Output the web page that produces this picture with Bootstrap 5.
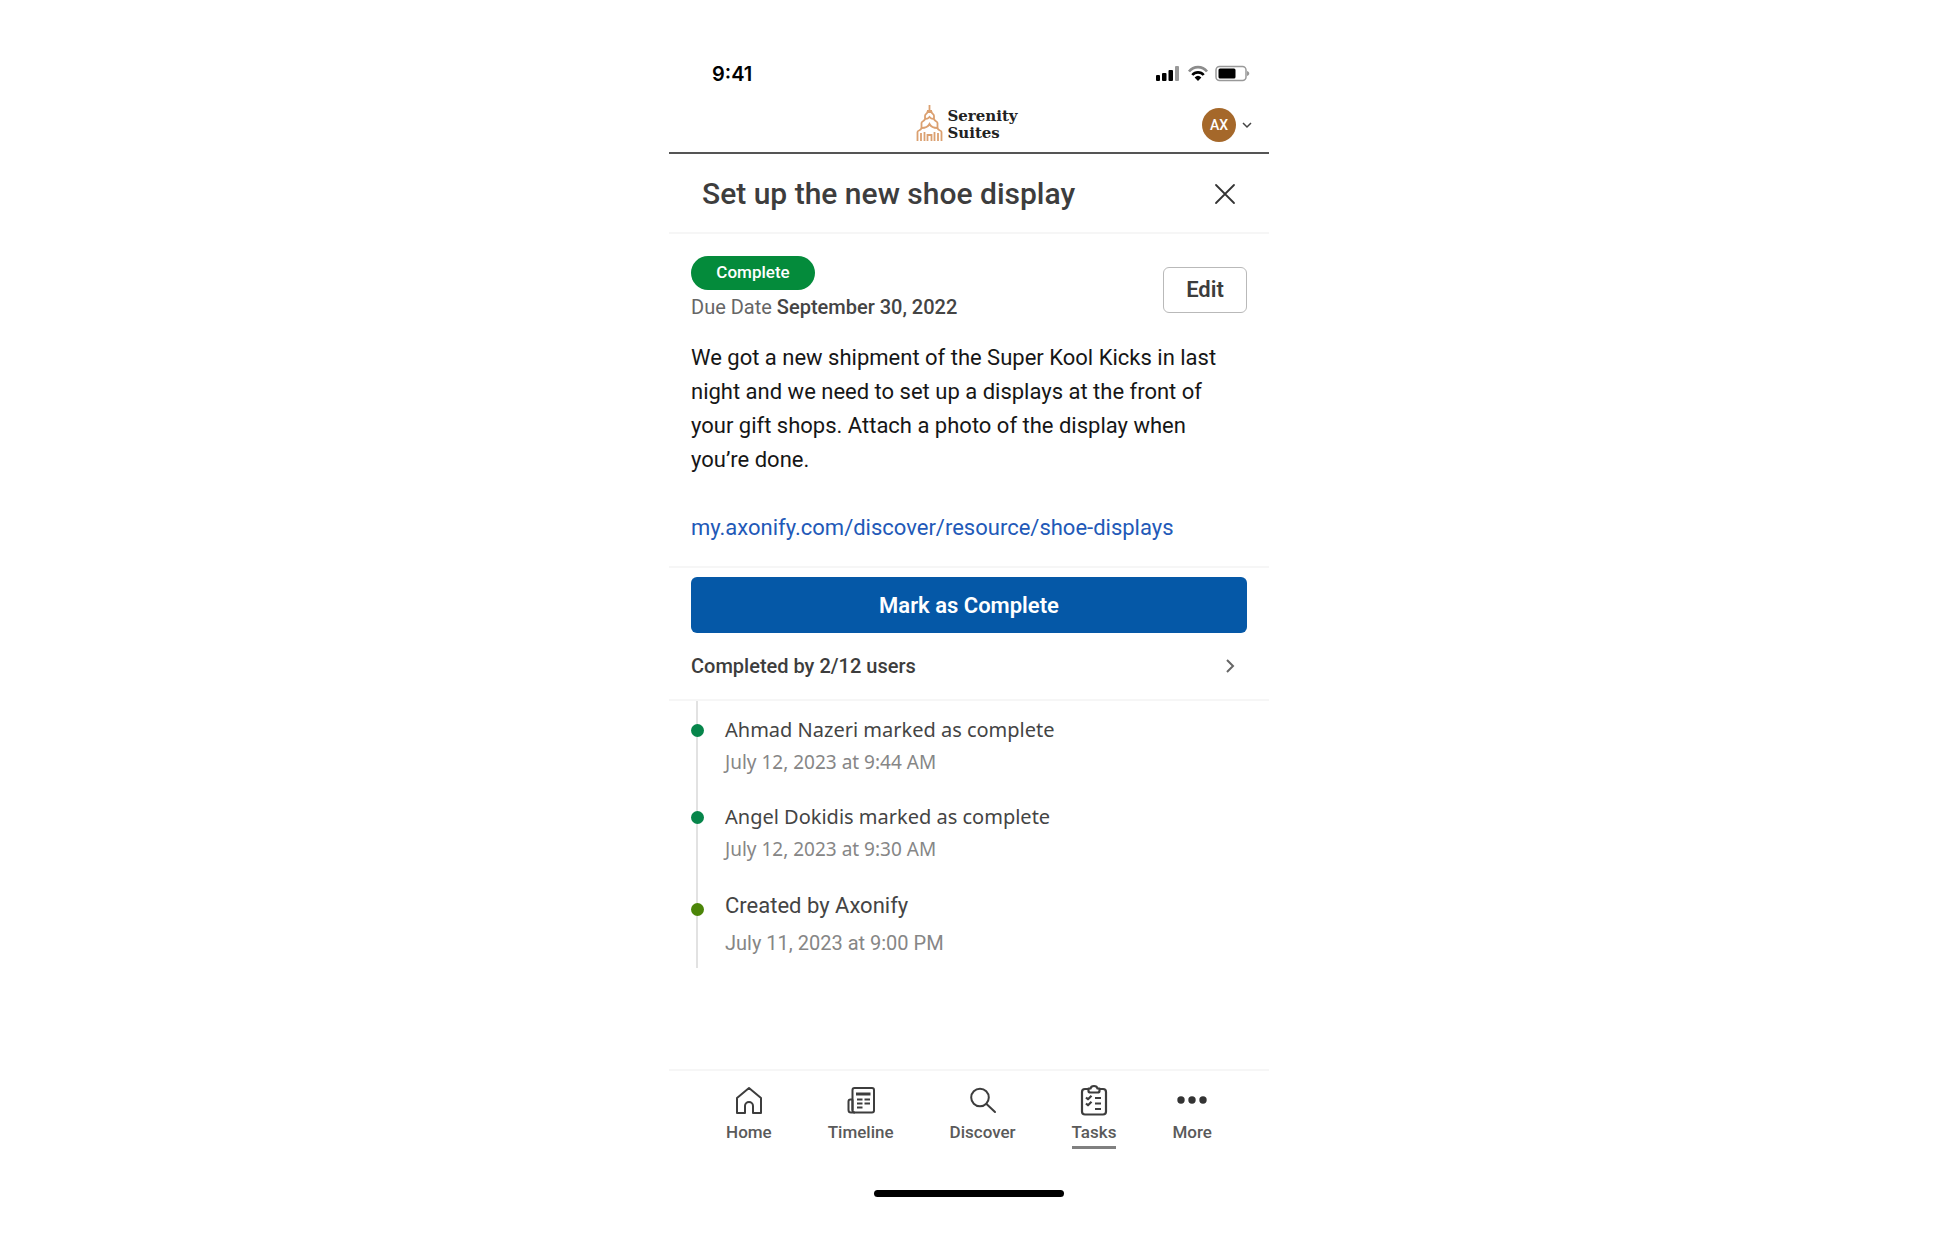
<!DOCTYPE html>
<html lang="en">
<head>
<meta charset="utf-8">
<meta name="viewport" content="width=device-width, initial-scale=1">
<title>Set up the new shoe display</title>
<link href="https://cdn.jsdelivr.net/npm/bootstrap@5.3.0/dist/css/bootstrap.min.css" rel="stylesheet">
<style>
  body { font-family: Roboto, "Liberation Sans", sans-serif; color: #3d3d3d; background: #fff; }
  .phone { max-width: 600px; padding-top: 55px; font-size: 22px; }
  .inset { padding-left: 22px; padding-right: 22px; }
  .hairline { border-bottom: 2px solid #f6f6f6; }

  .status-bar { height: 38px; padding: 0 18px 0 43px; }
  .clock { font-family: Inter, sans-serif; font-weight: 600; font-size: 20px; line-height: 38px; color: #000; }

  .brand-bar { height: 61px; border-bottom: 2px solid #555; display: grid; grid-template-columns: 1fr auto 1fr; align-items: center; padding: 5px 15px 0; }
  .brand-name { font-family: "DejaVu Serif", serif; font-weight: 700; font-size: 15px; line-height: 17px; color: #222; }
  .avatar { width: 34px; height: 34px; background: #a5682a; color: #fff; font-size: 14px; font-weight: 500; }

  .title-bar { height: 80px; padding: 2px 32px 0 33px; }
  .title-bar h1 { font-size: 30px; font-weight: 500; line-height: 36px; }

  .summary { padding-top: 22px; padding-bottom: 21px; }
  .state-pill { width: 124px; height: 34px; background: #048b3b; color: #fff; font-size: 17px; font-weight: 500; }
  .due { font-size: 20px; line-height: 34px; color: #666; }
  .due strong { font-weight: 500; color: #444; }
  .btn-edit { width: 84px; height: 46px; padding: 0; border: 1px solid #b9b9b9; border-radius: 6px; font-size: 22px; font-weight: 600; line-height: 40px; color: #3d3d3d; }
  .details { font-size: 22px; line-height: 34px; color: #161616; padding-top: 17px; }
  .details a { color: #2259b8; }

  .btn-done { height: 56px; background: #0558a7; color: #fff; border: 0; border-radius: 6px; font-size: 22px; font-weight: 600; }
  .actions { padding-top: 9px; }
  .who { height: 66px; padding: 0 11px 0 0; font-size: 20px; font-weight: 500; color: #3d3d3d; }

  .timeline-list { border-left: 2px solid #e2e2e2; margin-left: 27px; height: 267px; padding: 14px 0 0 27px; }
  .event { position: relative; height: 87px; color: #444; font-family: "Noto Sans", sans-serif; font-size: 20px; line-height: 30px; }
  .event small { display: block; font-size: 19px; line-height: 34px; color: #868686; }
  .event::before { content: ""; position: absolute; left: -34px; top: 9px; width: 13px; height: 13px; border-radius: 50%; background: #06854a; }
  .event.created { font-family: Roboto, sans-serif; font-size: 22px; line-height: 34px; }
  .event.created small { font-size: 20px; line-height: 40px; }
  .event.created::before { top: 14px; background: #4b8508; }

  .tab-bar { margin-top: 101px; border-top: 2px solid #f6f6f6; padding-top: 12px; gap: 56px; }
  .tab-bar a { color: #5a5a5a; font-size: 17px; font-weight: 500; line-height: 26px; padding-bottom: 1px; border-bottom: 3px solid transparent; }
  .tab-bar a.active { border-color: #808080; }
  .tab-bar svg { display: block; margin: 0 auto 2px; }
  .home-bar { width: 190px; height: 7px; margin-top: 41px; background: #000; }
</style>
<script src="https://cdn.jsdelivr.net/npm/bootstrap@5.3.0/dist/js/bootstrap.bundle.min.js"></script>
</head>
<body>
<div class="phone w-100 mx-auto">
  <div class="status-bar d-flex justify-content-between align-items-center">
    <span class="clock">9:41</span>
    <svg width="96" height="20" viewBox="0 0 96 20" aria-hidden="true">
      <rect x="1" y="11" width="4" height="6" rx="1"/>
      <rect x="7" y="9" width="4.500" height="8" rx="1"/>
      <rect x="13.500" y="6" width="4.500" height="11" rx="1"/>
      <rect x="20" y="2" width="4" height="15" rx="1" fill="#999"/>
      <path d="M34 7.500A11.500 11.500 0 0 1 52 7.500" fill="none" stroke="#8c8c8c" stroke-width="2.600"/>
      <path d="M37.300 11A7.500 7.500 0 0 1 48.700 11" fill="none" stroke="#000" stroke-width="2.600"/>
      <path d="M43 17l-3.400-3.600a5 5 0 0 1 6.800 0z"/>
      <rect x="61" y="2.500" width="30" height="14" rx="3.500" fill="none" stroke="#999" stroke-width="1.500"/>
      <rect x="63.500" y="4.500" width="17" height="10" rx="1.500"/>
      <path d="M92 7c3 1 3 4 0 5z" fill="#999"/>
    </svg>
  </div>

  <header class="brand-bar">
    <div></div>
    <div class="d-flex align-items-center gap-1 me-1">
      <svg class="mb-1" width="27" height="38" viewBox="0 0 27 38" fill="none" stroke="#dba070" stroke-width="1.800" aria-hidden="true">
        <path d="M13.500 1v5M11 7h5M9 15v-3c0-2 2-2 2.500-4h4c.5 2 2.500 2 2.500 4v3M5.500 24v-5c0-2 3-1.500 3.500-4 2 0 3.500-.5 4.500-2 1 1.500 2.500 2 4.500 2 .5 2.500 3.500 2 3.500 4v5"/>
        <path d="M5.500 24c3.500 0 6.500-1 8-4 1.500 3 4.500 4 8 4M1.500 37v-9c0-2 3.500-1 4-4M25.500 37v-9c0-2-3.500-1-4-4"/>
        <path d="M5 37v-8M8.500 37v-9M18.500 37v-9M22 37v-8M11.500 37v-6h4v6"/>
      </svg>
      <div class="brand-name">Serenity<br>Suites</div>
    </div>
    <button class="btn p-0 border-0 d-flex align-items-center justify-content-end gap-1" type="button" aria-label="Account menu">
      <span class="avatar rounded-circle d-flex align-items-center justify-content-center">AX</span>
      <svg width="14" height="14" viewBox="0 0 14 14" fill="none" stroke="#444" stroke-width="1.500" aria-hidden="true"><path d="M3 5l4 4 4-4"/></svg>
    </button>
  </header>

  <div class="title-bar hairline d-flex align-items-center justify-content-between">
    <h1 class="m-0">Set up the new shoe display</h1>
    <button class="btn p-0 border-0 d-flex" type="button" aria-label="Close">
      <svg width="24" height="24" viewBox="0 0 24 24" fill="none" stroke="#333" stroke-width="1.800" stroke-linecap="round"><path d="M3 3l18 18M21 3L3 21"/></svg>
    </button>
  </div>

  <main>
    <section class="inset summary hairline">
      <div class="d-flex justify-content-between align-items-center">
        <div>
          <div class="state-pill rounded-pill d-flex align-items-center justify-content-center">Complete</div>
          <div class="due">Due Date <strong>September 30, 2022</strong></div>
        </div>
        <button class="btn btn-edit" type="button">Edit</button>
      </div>
      <div class="details">
        <p class="m-0">We got a new shipment of the Super Kool Kicks in last night and we need to set up a displays at the front of your gift shops. Attach a photo of the display when you’re done.</p>
        <br>
        <a class="text-decoration-none" href="#">my.axonify.com/discover/resource/shoe-displays</a>
      </div>
    </section>

    <section class="inset actions hairline">
      <button class="btn btn-done w-100" type="button">Mark as Complete</button>
      <button class="btn who w-100 border-0 d-flex align-items-center justify-content-between" type="button">
        Completed by 2/12 users
        <svg width="12" height="18" viewBox="0 0 12 18" fill="none" stroke="#666" stroke-width="2" aria-hidden="true"><path d="M3 3l6 6-6 6"/></svg>
      </button>
    </section>

    <ul class="timeline-list list-unstyled mb-0">
      <li class="event">Ahmad Nazeri marked as complete<small>July 12, 2023 at 9:44 AM</small></li>
      <li class="event">Angel Dokidis marked as complete<small>July 12, 2023 at 9:30 AM</small></li>
      <li class="event created">Created by Axonify<small>July 11, 2023 at 9:00 PM</small></li>
    </ul>
  </main>

  <nav class="tab-bar d-flex justify-content-center" aria-label="Main">
    <a class="text-decoration-none" href="#">
      <svg width="32" height="34" viewBox="0 0 32 34" fill="none" stroke="#3d3d3d" stroke-width="2" stroke-linejoin="round"><path d="M4 30V15L16 5l12 10v15h-8v-7a4 4 0 0 0-8 0v7z"/></svg>Home</a>
    <a class="text-decoration-none" href="#">
      <svg width="32" height="34" viewBox="0 0 32 34" fill="none" stroke="#3d3d3d" stroke-width="2" stroke-linejoin="round"><rect x="7.500" y="5" width="21.500" height="24.500" rx="2"/><path d="M7.500 16.500H5.500q-2 0-2 2V27Q3.500 29.500 6 29.500h4M7.500 16.500v11"/><path d="M11 11h14.500" stroke-width="3"/><path d="M12 16.500h5.500M19.500 16.500H25M12 20.500h5.500M19.500 20.500H25M12 24.500h5.500"/></svg>Timeline</a>
    <a class="text-decoration-none" href="#">
      <svg width="32" height="34" viewBox="0 0 32 34" fill="none" stroke="#3d3d3d" stroke-width="2" stroke-linecap="round"><circle cx="13" cy="14.500" r="8.800"/><path d="M19.500 21L28 29"/></svg>Discover</a>
    <a class="text-decoration-none active" href="#" aria-current="page">
      <svg width="32" height="34" viewBox="0 0 32 34" fill="none" stroke="#3d3d3d" stroke-width="2.200" stroke-linejoin="round"><path d="M10 6H7Q4 6 4 9v19.500Q4 31.500 7 31.500h18q3 0 3-3V9q0-3-3-3h-3"/><path d="M10.500 8V5.500h2Q13 3 16 3t3.500 2.500h2V8q0 1.500-2 1.500h-7q-2 0-2-1.500z"/><path d="M8 14.500l2 1.800 3.500-3.500M8 20.500l2 1.800 3.500-3.500M17 15h6M17 20.500h6M17 26h6"/></svg>Tasks</a>
    <a class="text-decoration-none" href="#">
      <svg width="32" height="34" viewBox="0 0 32 34" fill="#333"><circle cx="5" cy="17" r="3.700"/><circle cx="16" cy="17" r="3.700"/><circle cx="27" cy="17" r="3.700"/></svg>More</a>
  </nav>
  <div class="home-bar rounded-pill mx-auto"></div>
</div>
</body>
</html>
